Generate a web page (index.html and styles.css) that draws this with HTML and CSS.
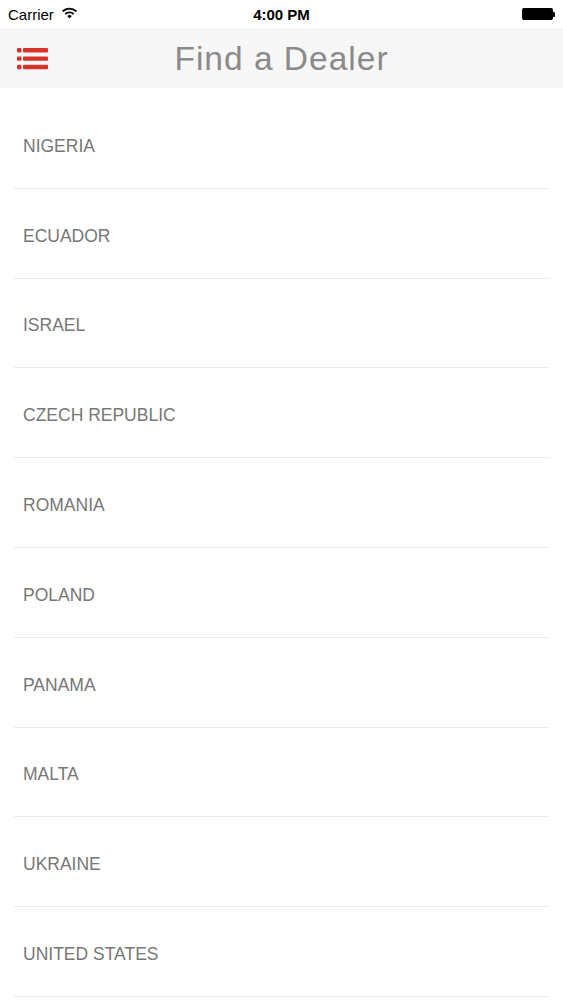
FILE: index.html
```html
<!DOCTYPE html>
<html lang="en">
<head>
  <meta charset="UTF-8">
  <title>Find a Dealer</title>
  <link rel="stylesheet" href="styles.css">
</head>
<body>

<div class="status-bar">
  <div class="status-left">
    <span>Carrier</span>
    <svg class="wifi" width="17" height="12" viewBox="0 0 17 12">
      <path d="M8.5 11.5 L6.2 9 A3.3 3.3 0 0 1 10.8 9 Z" fill="#000"/>
      <path d="M4.3 7.1 A6 6 0 0 1 12.7 7.1" stroke="#000" stroke-width="1.8" fill="none"/>
      <path d="M1.6 4.4 A9.8 9.8 0 0 1 15.4 4.4" stroke="#000" stroke-width="1.8" fill="none"/>
    </svg>
  </div>
  <div class="status-time">4:00 PM</div>
  <div class="status-right">
    <span class="battery"></span><span class="battery-tip"></span>
  </div>
</div>

<header class="nav-bar">
  <svg class="menu-icon" width="32" height="22" viewBox="0 0 32 22">
    <rect x="0" y="0" width="4.5" height="4.4" rx="1" fill="#d9322b"/>
    <rect x="6" y="0" width="25" height="4.4" rx="1" fill="#d9322b"/>
    <rect x="0" y="8.4" width="4.5" height="4.4" rx="1" fill="#d9322b"/>
    <rect x="6" y="8.4" width="25" height="4.4" rx="1" fill="#d9322b"/>
    <rect x="0" y="16.8" width="4.5" height="4.4" rx="1" fill="#d9322b"/>
    <rect x="6" y="16.8" width="25" height="4.4" rx="1" fill="#d9322b"/>
  </svg>
  <h1>Find a Dealer</h1>
</header>

<ul class="country-list">
  <li>NIGERIA</li>
  <li>ECUADOR</li>
  <li>ISRAEL</li>
  <li>CZECH REPUBLIC</li>
  <li>ROMANIA</li>
  <li>POLAND</li>
  <li>PANAMA</li>
  <li>MALTA</li>
  <li>UKRAINE</li>
  <li>UNITED STATES</li>
</ul>

</body>
</html>
```

FILE: styles.css
```css
body {
  font-family: 'Liberation Sans', Arial, sans-serif;
  margin: 0;
  padding: 0;
  background-color: #fff;
  color: #333;
  overflow: hidden;
}

.status-bar {
  height: 28px;
  display: flex;
  align-items: center;
  justify-content: space-between;
  padding: 0 8px;
  font-size: 15px;
  color: #000;
  position: relative;
}

.status-left {
  display: flex;
  align-items: center;
  gap: 7px;
}

.wifi {
  margin-top: -2px;
}

.status-time {
  position: absolute;
  left: 0;
  right: 0;
  text-align: center;
  font-weight: bold;
  font-size: 15px;
}

.status-right {
  display: flex;
  align-items: center;
}

.battery {
  width: 31px;
  height: 12px;
  background-color: #000;
  border-radius: 2px;
}

.battery-tip {
  width: 2px;
  height: 5px;
  background-color: #000;
  border-radius: 0 1px 1px 0;
}

.nav-bar {
  height: 60px;
  background-color: #f7f7f7;
  display: flex;
  align-items: center;
  position: relative;
}

.menu-icon {
  margin-left: 17px;
  margin-top: 1px;
}

.nav-bar h1 {
  position: absolute;
  left: 0;
  right: 0;
  margin: 0;
  padding-top: 2px;
  text-align: center;
  font-size: 33.5px;
  font-weight: normal;
  letter-spacing: 1px;
  color: #8a8a8a;
}

.country-list {
  list-style-type: none;
  margin: 11px 14px 0;
  padding: 0;
}

.country-list li {
  box-sizing: border-box;
  height: 89.8px;
  border-bottom: 1px solid #ebebeb;
  display: flex;
  align-items: center;
  padding: 6px 0 0 9px;
  font-size: 17.5px;
  color: #777;
}
```
